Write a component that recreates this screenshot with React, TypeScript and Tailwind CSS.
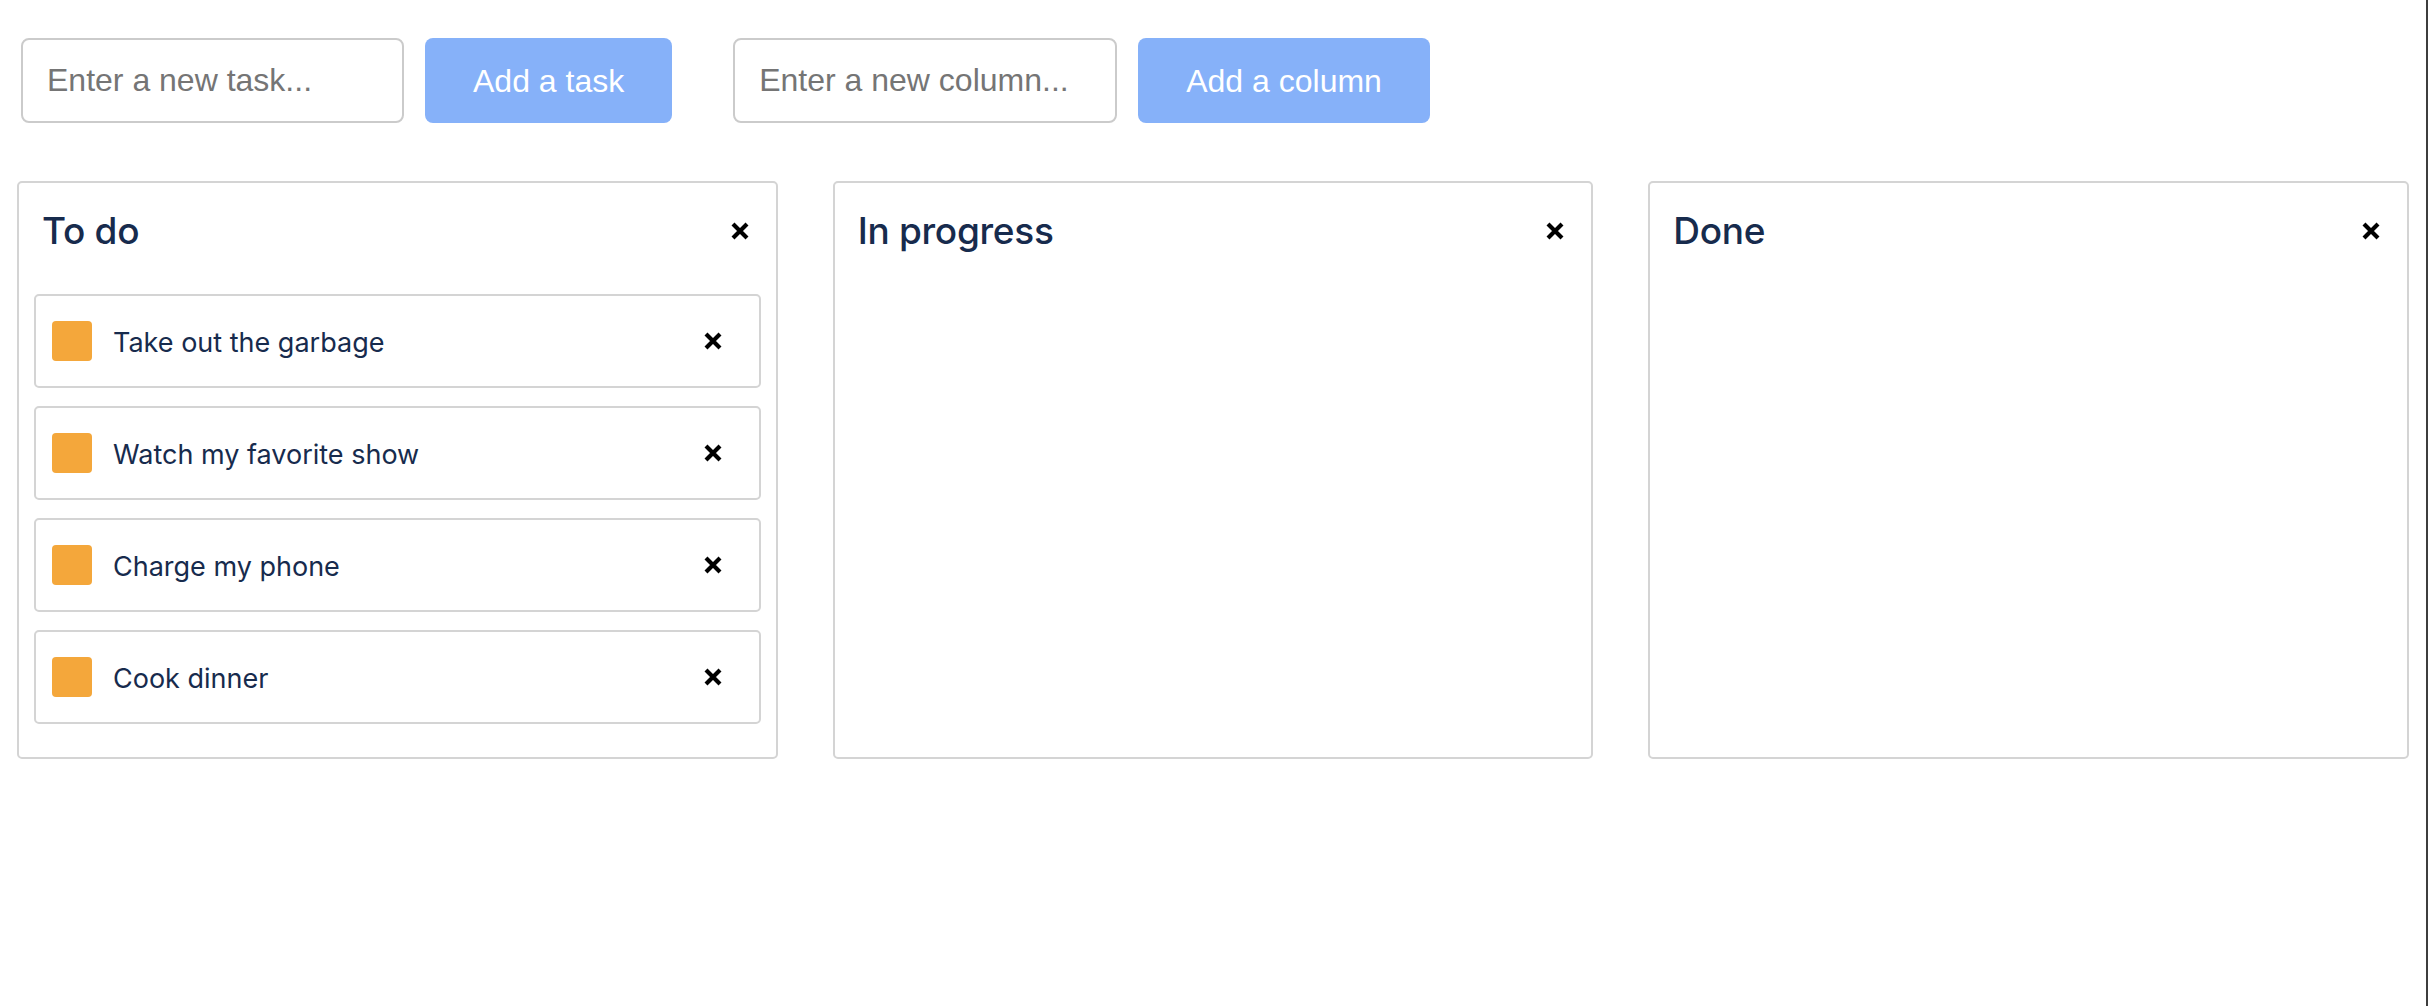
import React, { useState } from 'react';

type Column = { id: number; title: string; tasks: string[] };

const initialColumns: Column[] = [
  {
    id: 1,
    title: 'To do',
    tasks: ['Take out the garbage', 'Watch my favorite show', 'Charge my phone', 'Cook dinner'],
  },
  { id: 2, title: 'In progress', tasks: [] },
  { id: 3, title: 'Done', tasks: [] },
];

const CloseIcon: React.FC = () => (
  <svg width="20" height="20" viewBox="0 0 20 20" className="block">
    <path d="M3 3 L17 17 M17 3 L3 17" stroke="#000" strokeWidth="4.2" strokeLinecap="butt" />
  </svg>
);

const App: React.FC = () => {
  const [columns] = useState<Column[]>(initialColumns);

  return (
    <div className="min-h-screen w-full bg-white border-r-2 border-[#3d3d3d] font-['Liberation_Sans',Arial,sans-serif]">
      <div className="flex items-center pt-[38px] pl-[21px]">
        <input
          placeholder="Enter a new task..."
          className="w-[383px] h-[85px] border-2 border-[#cbcbcb] rounded-[8px] pl-[24px] text-[32px] placeholder:text-[#757575] outline-none"
        />
        <button className="ml-[21px] h-[85px] px-[48px] rounded-[8px] bg-[#86b1f9] text-white text-[32px]">
          Add a task
        </button>
        <input
          placeholder="Enter a new column..."
          className="ml-[61px] w-[384px] h-[85px] border-2 border-[#cbcbcb] rounded-[8px] pl-[24px] text-[32px] placeholder:text-[#757575] outline-none"
        />
        <button className="ml-[21px] h-[85px] px-[48px] rounded-[8px] bg-[#86b1f9] text-white text-[32px]">
          Add a column
        </button>
      </div>

      <div className="flex gap-[55px] px-[17px] mt-[58px] font-['Inter',sans-serif]">
        {columns.map((col) => (
          <div key={col.id} className="flex-1 border-2 border-[#d4d4d4] rounded-[5px] px-[15px] pt-[16px] pb-[33px]">
            <div className="flex items-center justify-between h-[64px] pl-[8px] pr-[11px]">
              <h2 className="text-[37px] font-medium text-[#172b4d] tracking-[-0.3px]">{col.title}</h2>
              <CloseIcon />
            </div>
            <div className="flex flex-col gap-[18px] mt-[31px]">
              {col.tasks.map((task) => (
                <div
                  key={task}
                  className="flex items-center h-[94px] border-2 border-[#d4d4d4] rounded-[5px] pl-[16px] pr-[36px]"
                >
                  <div className="w-[40px] h-[40px] rounded-[4px] bg-[#f4a73b]" />
                  <span className="ml-[21px] flex-1 text-[27px] leading-none pt-[3px] text-[#172b4d]">{task}</span>
                  <CloseIcon />
                </div>
              ))}
            </div>
          </div>
        ))}
      </div>
    </div>
  );
};

export default App;
